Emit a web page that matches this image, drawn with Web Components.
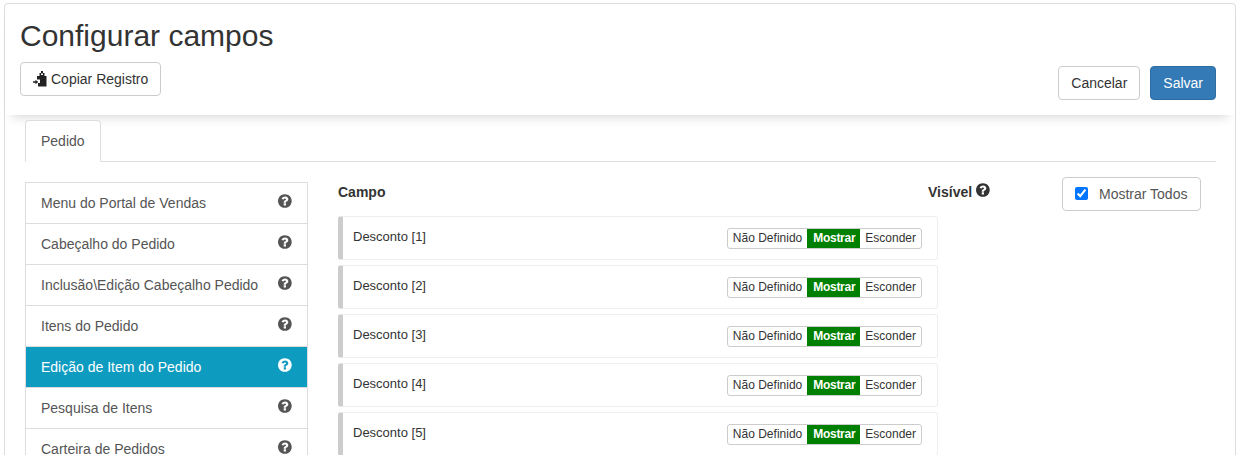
<!DOCTYPE html>
<html lang="pt-BR">
<head>
<meta charset="utf-8">
<title>Configurar campos</title>
<style>
    html, body { margin: 0; height: 455px; overflow: hidden; background: #fff; }
    body { font: 14px/20px "Liberation Sans", Arial, sans-serif; color: #333; }
</style>
</head>
<body>
<config-page>
    <page-header slot="header" heading="Configurar campos">
        <ui-button slot="left"><copy-icon></copy-icon>Copiar Registro</ui-button>
        <ui-button slot="actions">Cancelar</ui-button>
        <ui-button slot="actions" kind="primary">Salvar</ui-button>
    </page-header>

    <tab-bar slot="tabs"><tab-item>Pedido</tab-item></tab-bar>

    <side-menu slot="menu">
        <menu-item>Menu do Portal de Vendas</menu-item>
        <menu-item>Cabeçalho do Pedido</menu-item>
        <menu-item>Inclusão\Edição Cabeçalho Pedido</menu-item>
        <menu-item>Itens do Pedido</menu-item>
        <menu-item active>Edição de Item do Pedido</menu-item>
        <menu-item>Pesquisa de Itens</menu-item>
        <menu-item>Carteira de Pedidos</menu-item>
    </side-menu>

    <field-list slot="fields">
        <field-row>Desconto [1]</field-row>
        <field-row>Desconto [2]</field-row>
        <field-row>Desconto [3]</field-row>
        <field-row>Desconto [4]</field-row>
        <field-row>Desconto [5]</field-row>
    </field-list>

    <show-all slot="aside">Mostrar Todos</show-all>
</config-page>

<script>
    (function () {
        'use strict';

        const QUESTION = 'M896 1376v-192q0-14-9-23t-23-9h-192q-14 0-23 9t-9 23v192q0 14 9 23t23 9h192q14 0 23-9t9-23zm256-672q0-88-55.5-163t-138.5-116-170-41q-243 0-371 213-15 24 8 42l132 100q7 6 19 6 16 0 25-12 53-68 86-92 34-24 86-24 48 0 85.5 26t37.5 59q0 38-20 61t-68 45q-63 28-115.5 86.5t-52.5 125.5v36q0 14 9 23t23 9h192q14 0 23-9t9-23q0-19 21.5-49.5t54.5-49.5q32-18 49-28.5t46-35 44.5-48 28-60.5 12.5-81zm384 192q0 209-103 385.5t-279.5 279.5-385.5 103-385.5-103-279.5-279.5-103-385.5 103-385.5 279.5-279.5 385.5-103 385.5 103 279.5 279.5 103 385.5z';

        // small helper, every element here is just a shadow root with fixed markup
        function define(name, html) {
            customElements.define(name, class extends HTMLElement {
                constructor() {
                    super();
                    this.attachShadow({mode: 'open'}).innerHTML = typeof html === 'function' ? html(this) : html;
                }
            });
        }

        define('config-page', `
            <style>
                :host {
                    display: block;
                    box-sizing: border-box;
                    width: 1232px;
                    height: 600px;
                    margin: 3px 0 0 4px;
                    border: 1px solid #ddd;
                    border-radius: 4px;
                }
                .body { padding: 5px 19px 0 20px; }
                .columns {
                    display: grid;
                    grid-template-columns: 283px 600px 1fr;
                    column-gap: 30px;
                    margin-top: 20px;
                }
                .columns ::slotted([slot=aside]) {
                    justify-self: end;
                    margin: -5px 15px 0 0;
                }
            </style>
            <slot name="header"></slot>
            <div class="body">
                <slot name="tabs"></slot>
                <div class="columns">
                    <slot name="menu"></slot>
                    <slot name="fields"></slot>
                    <slot name="aside"></slot>
                </div>
            </div>
        `);

        define('page-header', el => `
            <style>
                :host {
                    display: flex;
                    justify-content: space-between;
                    align-items: flex-end;
                    padding: 15px 19px 15px 15px;
                    border-radius: 4px 4px 0 0;
                    box-shadow: 0 9px 10px -7px rgba(0, 0, 0, .16);
                }
                h1 {
                    margin: 0 0 10px;
                    font-size: 30px;
                    font-weight: 400;
                    line-height: 33px;
                }
                .left { padding-bottom: 4px; }
                .actions { display: flex; gap: 10px; }
            </style>
            <div class="left">
                <h1>${el.getAttribute('heading')}</h1>
                <slot name="left"></slot>
            </div>
            <div class="actions"><slot name="actions"></slot></div>
        `);

        define('ui-button', `
            <style>
                :host {
                    display: inline-flex;
                    align-items: center;
                    box-sizing: border-box;
                    height: 34px;
                    padding: 0 12px;
                    border: 1px solid #ccc;
                    border-radius: 4px;
                    background: #fff;
                    color: #333;
                    white-space: nowrap;
                }
                :host([kind=primary]) {
                    border-color: #2e6da4;
                    background: #337ab7;
                    color: #fff;
                }
            </style>
            <slot></slot>
        `);

        define('copy-icon', `
            <style>
                :host { display: block; width: 15px; height: 16px; margin-right: 3px; }
                svg { display: block; }
            </style>
            <svg width="15" height="16" viewBox="0 0 15 16" fill="#222">
                <path d="M4 5h2.500V2H8V0h2v2h1.500v3h2v10.500H5V12h2V8.500H4z"/>
                <path d="M8 2.500h2V4H8z" fill="#fff"/>
                <path d="M0 10.300h2.500V8.800L5.300 11 2.500 13.200v-1.500H0z"/>
            </svg>
        `);

        define('tab-bar', `
            <style>
                :host { display: flex; border-bottom: 1px solid #ddd; }
            </style>
            <slot></slot>
        `);

        define('tab-item', `
            <style>
                :host {
                    display: block;
                    margin-bottom: -1px;
                    padding: 10px 15px;
                    border: 1px solid #ddd;
                    border-bottom-color: #fff;
                    border-radius: 4px 4px 0 0;
                    background: #fff;
                    color: #555;
                }
            </style>
            <slot></slot>
        `);

        define('side-menu', `
            <style>
                :host { display: block; }
            </style>
            <slot></slot>
        `);

        define('help-icon', `
            <style>
                :host { display: block; width: 16px; height: 16px; }
                svg { display: block; fill: currentColor; }
            </style>
            <svg width="16" height="16" viewBox="0 0 1792 1792"><path d="${QUESTION}"/></svg>
        `);

        define('menu-item', `
            <style>
                :host {
                    display: flex;
                    justify-content: space-between;
                    align-items: flex-start;
                    margin-bottom: -1px;
                    padding: 10px 13px 10px 15px;
                    border: 1px solid #ddd;
                    background: #fff;
                    color: #555;
                    white-space: nowrap;
                }
                :host([active]) { background: #0d9bbf; color: #fff; }
            </style>
            <slot></slot>
            <help-icon></help-icon>
        `);

        define('field-list', `
            <style>
                :host { display: block; }
                .head {
                    display: flex;
                    height: 34px;
                    font-weight: 700;
                    line-height: 20px;
                }
                .campo { flex: none; width: 590px; }
                .visivel { display: flex; flex: none; gap: 4px; }
                help-icon { color: #333; }
            </style>
            <div class="head">
                <div class="campo">Campo</div>
                <div class="visivel">Visível <help-icon></help-icon></div>
            </div>
            <slot></slot>
        `);

        define('field-row', `
            <style>
                :host {
                    display: flex;
                    justify-content: space-between;
                    align-items: center;
                    box-sizing: border-box;
                    height: 44px;
                    margin-bottom: 5px;
                    padding: 0 15px 0 10px;
                    border: 1px solid #eee;
                    border-left: 5px solid #ccc;
                    border-radius: 3px;
                    font-size: 13px;
                }
                .label { padding-bottom: 2px; }
            </style>
            <div class="label"><slot></slot></div>
            <seg-toggle></seg-toggle>
        `);

        define('seg-toggle', `
            <style>
                :host {
                    display: flex;
                    border: 1px solid #ccc;
                    border-radius: 3px;
                    font-size: 12px;
                    line-height: 19px;
                }
                span { padding: 0 5px; }
                .on {
                    padding: 0 5px 0 6px;
                    background: #008000;
                    color: #fff;
                    font-weight: 700;
                    letter-spacing: -.28px;
                }
            </style>
            <span>Não Definido</span>
            <span class="on">Mostrar</span>
            <span>Esconder</span>
        `);

        define('show-all', `
            <style>
                :host {
                    display: flex;
                    align-items: center;
                    box-sizing: border-box;
                    width: 139px;
                    height: 34px;
                    padding: 0 12px;
                    border: 1px solid #ccc;
                    border-radius: 4px;
                    color: #555;
                    white-space: nowrap;
                }
                input { width: 13px; height: 13px; margin: 0 11px 2px 0; }
            </style>
            <input type="checkbox" checked>
            <slot></slot>
        `);
    })();
</script>
</body>
</html>
